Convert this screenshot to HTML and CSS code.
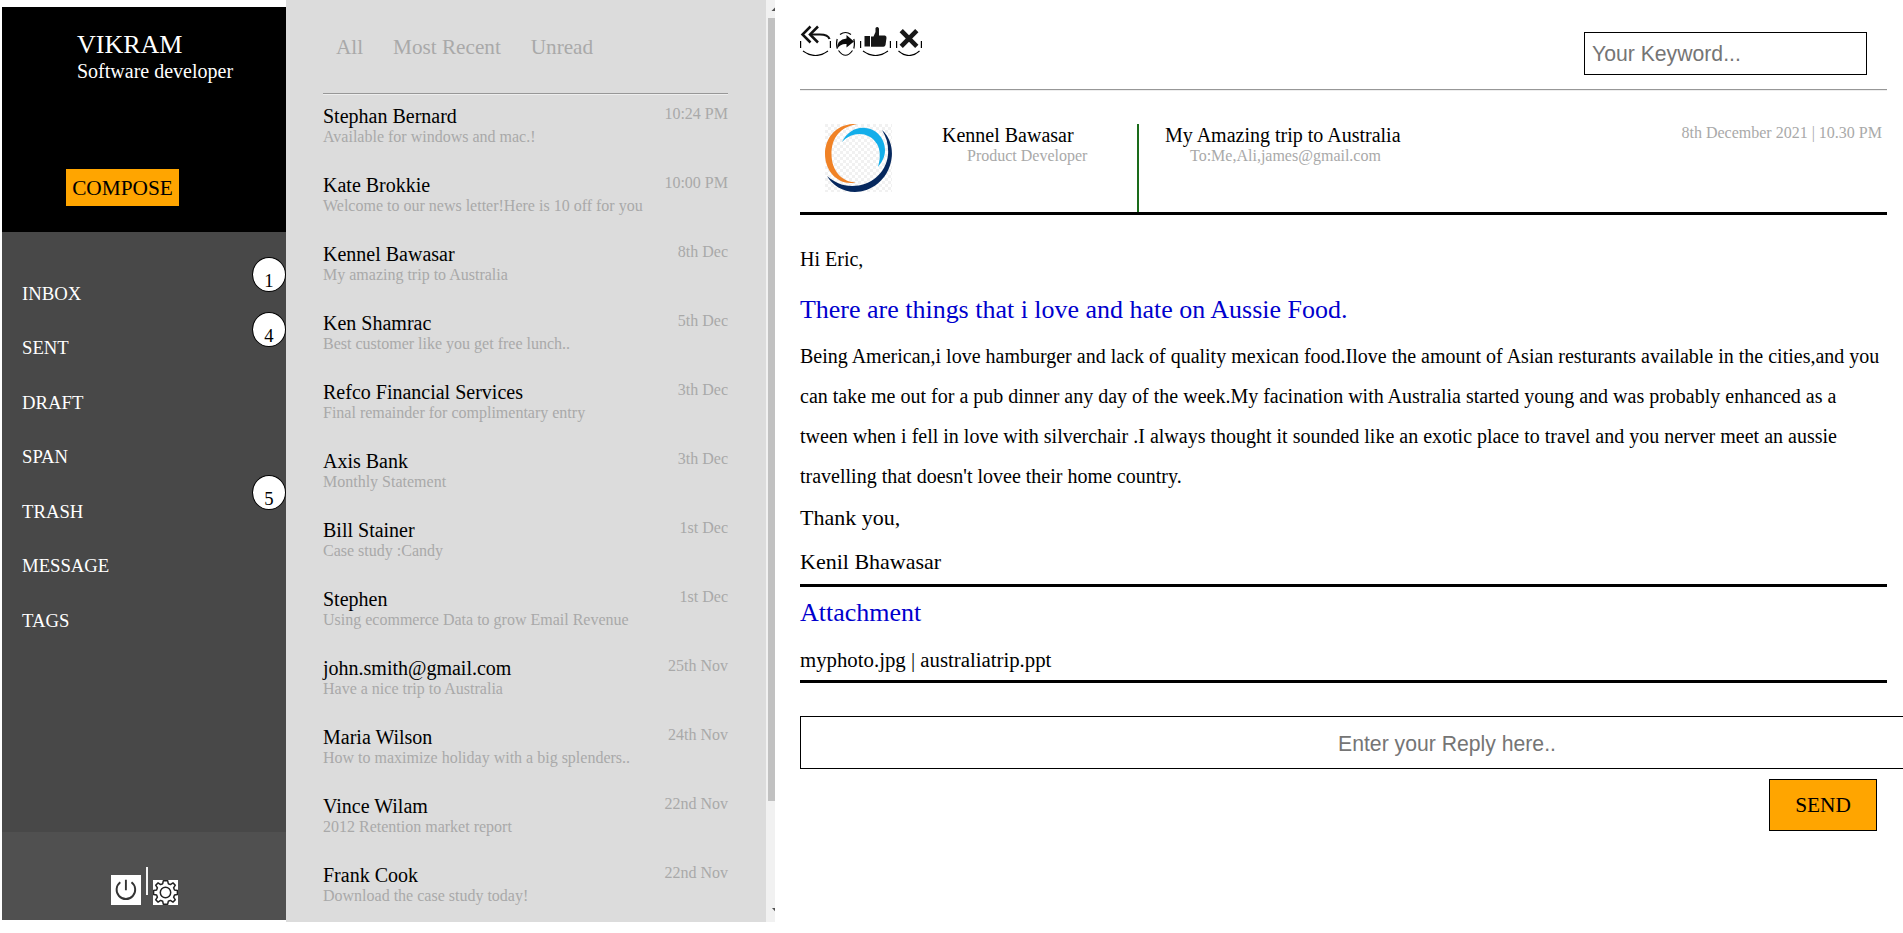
FILE: index.html
```html
<!DOCTYPE html>
<html lang="en">
<head>
<meta charset="utf-8">
<title>Mail</title>
<link rel="stylesheet" href="styles.css">
</head>
<body>
<div class="app">
  <aside class="sidebar">
    <header class="profile">
      <div class="profile-name">VIKRAM</div>
      <div class="profile-role">Software developer</div>
      <button class="compose">COMPOSE</button>
    </header>
    <nav class="folders">
      <a class="folder"><span>INBOX</span><b class="badge">1</b></a>
      <a class="folder"><span>SENT</span><b class="badge">4</b></a>
      <a class="folder"><span>DRAFT</span></a>
      <a class="folder"><span>SPAN</span></a>
      <a class="folder"><span>TRASH</span><b class="badge">5</b></a>
      <a class="folder"><span>MESSAGE</span></a>
      <a class="folder"><span>TAGS</span></a>
    </nav>
    <footer class="tools">
      <svg class="power" width="30" height="30" viewBox="0 0 30 30"><rect width="30" height="30" fill="#fff"/><path d="M9.3 7.3a9.3 9.3 0 1 0 11.2 0M14.9 4.7v10.5" fill="none" stroke="#333" stroke-width="1.9"/></svg>
      <span class="tools-rule"></span>
      <svg class="gear" width="25" height="25" viewBox="0 0 25 25"><rect width="25" height="25" fill="#fff"/><g fill="none" stroke="#222" stroke-width="1.5" stroke-linejoin="round"><circle cx="12.5" cy="12.5" r="5.2"/><path d="M10.3 .8h4.4l.6 2.9 2.1.9 2.6-1.7 2.3 2.3-1.7 2.6.9 2.2 2.9.5v4l-2.9.6-.9 2.1 1.7 2.6-2.3 2.3-2.6-1.7-2.1.9-.6 2.9h-4.4l-.6-2.9-2.1-.9-2.5 1.7-2.4-2.3 1.7-2.6-.8-2.1-3-.6v-4l3-.5.8-2.2-1.7-2.6 2.4-2.3 2.5 1.7 2.1-.9z"/></g></svg>
    </footer>
  </aside>

  <section class="list">
    <div class="tabs"><span>All</span><span>Most Recent</span><span>Unread</span></div>
    <ul class="mails">
      <li class="mail"><div><div class="from">Stephan Bernard</div><div class="subject">Available for windows and mac.!</div></div><time>10:24 PM</time></li>
      <li class="mail"><div><div class="from">Kate Brokkie</div><div class="subject">Welcome to our news letter!Here is 10 off for you</div></div><time>10:00 PM</time></li>
      <li class="mail"><div><div class="from">Kennel Bawasar</div><div class="subject">My amazing trip to Australia</div></div><time>8th Dec</time></li>
      <li class="mail"><div><div class="from">Ken Shamrac</div><div class="subject">Best customer like you get free lunch..</div></div><time>5th Dec</time></li>
      <li class="mail"><div><div class="from">Refco Financial Services</div><div class="subject">Final remainder for complimentary entry</div></div><time>3th Dec</time></li>
      <li class="mail"><div><div class="from">Axis Bank</div><div class="subject">Monthly Statement</div></div><time>3th Dec</time></li>
      <li class="mail"><div><div class="from">Bill Stainer</div><div class="subject">Case study :Candy</div></div><time>1st Dec</time></li>
      <li class="mail"><div><div class="from">Stephen</div><div class="subject">Using ecommerce Data to grow Email Revenue</div></div><time>1st Dec</time></li>
      <li class="mail"><div><div class="from">john.smith@gmail.com</div><div class="subject">Have a nice trip to Australia</div></div><time>25th Nov</time></li>
      <li class="mail"><div><div class="from">Maria Wilson</div><div class="subject">How to maximize holiday with a big splenders..</div></div><time>24th Nov</time></li>
      <li class="mail"><div><div class="from">Vince Wilam</div><div class="subject">2012 Retention market report</div></div><time>22nd Nov</time></li>
      <li class="mail"><div><div class="from">Frank Cook</div><div class="subject">Download the case study today!</div></div><time>22nd Nov</time></li>
    </ul>
  </section>
  <div class="scroll">
    <svg width="7" height="18" viewBox="0 0 7 18"><path d="M3.5 11 7 7.5V11z" fill="#505050"/></svg>
    <div class="thumb"></div>
    <svg class="scroll-down" width="7" height="18" viewBox="0 0 7 18"><path d="M4 4h3v3.200z" fill="#505050"/></svg>
  </div>

  <main class="reader">
    <div class="toolbar">
      <div class="actions">
        <svg width="31" height="34" viewBox="0 0 31 34"><g fill="none" stroke="#111"><path d="M10.5 4.500 2.500 12.500l8 8M18 4.500l-8 8 8 8" stroke-width="2.500"/><path d="M11 12.500h9q8 0 9.500 4.500" stroke-width="2.200"/><path d="M.6 19v7M30.400 19v7M3 29q12.500 9 25 0" stroke="#000" stroke-width="1.200"/></g></svg>
        <svg width="19" height="34" viewBox="0 0 19 34"><g fill="none" stroke="#000" stroke-width="1.200"><path d="M4 12.500q5.500-4 11 0M1.200 17q-1.200 4.500 0 9.500M17.800 17q1.200 4.500 0 9.500M2.500 28.500q7 9.500 14 0"/></g><path d="M1 27q0-9.500 9.500-10.500V13l7.500 6.500-7.500 6v-3.500q-6-.5-9.500 5z" fill="#0a0a0a"/></svg>
        <svg width="31" height="34" viewBox="0 0 31 34"><path d="M4.500 14h5.500v10.500H4.500zM11 14.500h2.500l2-4.500V6q2-2 3.500.500v7h6q1.800.500 1.500 2.500l-1 7q-.5 1.800-2 1.800H11z" fill="#161616"/><path d="M.6 19v7M30.400 19v7M3 29q12.500 9 25 0" fill="none" stroke="#000" stroke-width="1.200"/></svg>
        <svg width="26" height="34" viewBox="0 0 26 34"><path d="m5.200 8.700 15.600 15.600M20.800 8.700 5.200 24.300" fill="none" stroke="#181818" stroke-width="4.600"/><path d="M.6 19v7M25.400 19v7M2.500 29q10.500 9 21 0" fill="none" stroke="#000" stroke-width="1.200"/></svg>
      </div>
      <input class="search" placeholder="Your Keyword...">
    </div>

    <div class="message-head">
      <svg class="avatar" width="67" height="68" viewBox="0 0 67 68">
        <defs><pattern id="checks" width="6" height="6" patternUnits="userSpaceOnUse"><rect width="6" height="6" fill="#fff"/><path d="M0 0h3v3H0zM3 3h3v3H3z" fill="#f1f1f1"/></pattern></defs>
        <rect width="67" height="68" fill="url(#checks)"/>
        <path d="M32 0C12-1 0 13 0 30s13 32 31 28.500C17 58 6.500 47 6.500 30S16 3 32 0z" fill="#f08226"/>
        <path d="M17 18C22 8 31 3 40 4c13 1 20 12 20 22 0 7-3 12-7 17 3-10 2-18-1-23C44 7 27 7 17 18z" fill="#13aeea"/>
        <path d="M57 6c9 8 11 20 9.500 29C63 57 45 68 30 68 18 68 7 61 2 52c7 6 15 10 25 10 19 0 34-13 36-31 .7-9-1-17-6-25z" fill="#06285e"/>
      </svg>
      <div class="sender"><div>Kennel Bawasar</div><small>Product Developer</small></div>
      <div class="topic"><div>My Amazing trip to Australia</div><small>To:Me,Ali,james@gmail.com</small></div>
      <time>8th December 2021 | 10.30 PM</time>
    </div>

    <article class="message">
      <p class="greeting">Hi Eric,</p>
      <h2>There are things that i love and hate on Aussie Food.</h2>
      <p>Being American,i love hamburger and lack of quality mexican food.Ilove the amount of Asian resturants available in the cities,and you<br>can take me out for a pub dinner any day of the week.My facination with Australia started young and was probably enhanced as a<br>tween when i fell in love with silverchair .I always thought it sounded like an exotic place to travel and you nerver meet an aussie<br>travelling that doesn't lovee their home country.</p>
      <p class="sign">Thank you,<br>Kenil Bhawasar</p>
    </article>

    <section class="attachments">
      <h2>Attachment</h2>
      <p>myphoto.jpg | australiatrip.ppt</p>
    </section>

    <form class="reply">
      <input class="reply-text" placeholder="Enter your Reply here..">
      <button class="send" type="button">SEND</button>
    </form>
  </main>
</div>
</body>
</html>
```
FILE: styles.css
```css
* { box-sizing: border-box; }
body {
  margin: 0;
  overflow: hidden;
  background: #fff;
  color: #000;
  font: 20px/23px "Liberation Serif", "Times New Roman", serif;
}
h2, p, ul { margin: 0; padding: 0; font-weight: normal; list-style: none; }
svg { display: block; flex: none; }

.app { display: flex; height: 933px; align-items: flex-start; overflow: hidden; }

.sidebar {
  display: flex;
  flex: none;
  flex-direction: column;
  width: 284px;
  height: 913px;
  margin: 7px 0 0 2px;
  background: #484848;
  color: #fff;
}
.profile { height: 225px; padding: 22px 0 0 75px; background: #000; }
.profile-name { font-size: 26px; line-height: 31px; }
.profile-role { font-size: 20px; line-height: 23px; }
.compose {
  display: block;
  width: 113px;
  height: 37px;
  margin: 86px 0 0 -11px;
  padding: 1px 0 0;
  border: 0;
  background: orange;
  font: 21.33px/36px "Liberation Serif", serif;
}
.folders { display: flex; flex: 1; flex-direction: column; padding-top: 25px; }
.folder {
  display: flex;
  justify-content: space-between;
  height: 54.5px;
  padding-left: 20px;
  font-size: 18.72px;
}
.folder span { padding-top: 24.5px; }
.badge {
  width: 34px;
  height: 35px;
  padding-top: 11px;
  border: 1px solid #000;
  border-radius: 50%;
  background: #fff;
  color: #000;
  font-size: 18.72px;
  font-weight: normal;
  line-height: 23px;
  text-align: center;
}
.tools {
  display: flex;
  justify-content: flex-start;
  align-items: flex-end;
  height: 88px;
  padding: 0 0 15px 109px;
  background: #505050;
}
.tools-rule { width: 2px; height: 28px; margin: 0 5px 10px 5px; background: #f4f4f4; }

.list { flex: none; width: 480px; height: 922px; padding: 0 38px 0 37px; background: #dcdcdc; overflow: hidden; }
.tabs {
  display: flex;
  gap: 30px;
  height: 94px;
  padding: 35px 0 0 13px;
  border-bottom: 1px solid #979797;
  box-shadow: 0 1px #eee;
  color: #a9a9a9;
  font-size: 21.2px;
  line-height: 24px;
}
.mails { padding-top: 11px; }
.mail { display: flex; justify-content: space-between; height: 69px; }
.subject, .mail time { color: #a9a9a9; font-size: 16px; line-height: 18px; }

.scroll { display: flex; flex: none; flex-direction: column; width: 9px; height: 922px; padding-left: 2px; background: #f1f1f1; }
.thumb { height: 783px; background: #c1c1c1; }
.scroll-down { margin-top: auto; }

.reader { flex: none; width: 1087px; margin-left: 25px; }
.toolbar { display: flex; justify-content: space-between; height: 90px; border-bottom: 1px solid #979797; box-shadow: 0 1px #eee; }
.actions { display: flex; gap: 5px; padding-top: 22px; }
.search {
  width: 283px;
  height: 43px;
  margin: 32px 20px 0 0;
  padding: 0 7px;
  border: 1px solid #000;
  font: 21.2px "Liberation Sans", Arial, sans-serif;
}
.message-head { display: flex; height: 125px; padding: 34px 5px 0 25px; border-bottom: 3px solid #000; }
.sender { width: 195px; margin-left: 50px; }
.topic { padding-left: 26px; border-left: 2px solid #1a6b1a; }
.message-head small { display: block; padding-left: 25px; color: #a9a9a9; font-size: 16px; line-height: 18px; }
.message-head time { margin-left: auto; color: #a9a9a9; font-size: 16px; line-height: 18px; }
.message { padding-top: 24px; border-bottom: 3px solid #000; height: 372px; line-height: 40px; white-space: nowrap; }
.message .greeting { height: 45px; }
.message h2, .attachments h2 { color: mediumblue; font-size: 25.97px; line-height: 52px; }
.message .sign { font-size: 22px; line-height: 44px; }
.attachments { height: 96px; border-bottom: 3px solid #000; }
.attachments p { font-size: 20.8px; line-height: 42px; }
.reply { display: flex; flex-direction: column; padding-top: 33px; }
.reply-text {
  flex: none;
  width: 1294px;
  height: 53px;
  padding: 2px 2px 0;
  border: 1px solid #000;
  font: 21.2px "Liberation Sans", Arial, sans-serif;
  text-align: center;
}
.send {
  align-self: flex-end;
  width: 108px;
  height: 52px;
  margin: 10px 10px 0 0;
  border: 1px solid #000;
  background: orange;
  font: 21.33px "Liberation Serif", serif;
}
```
